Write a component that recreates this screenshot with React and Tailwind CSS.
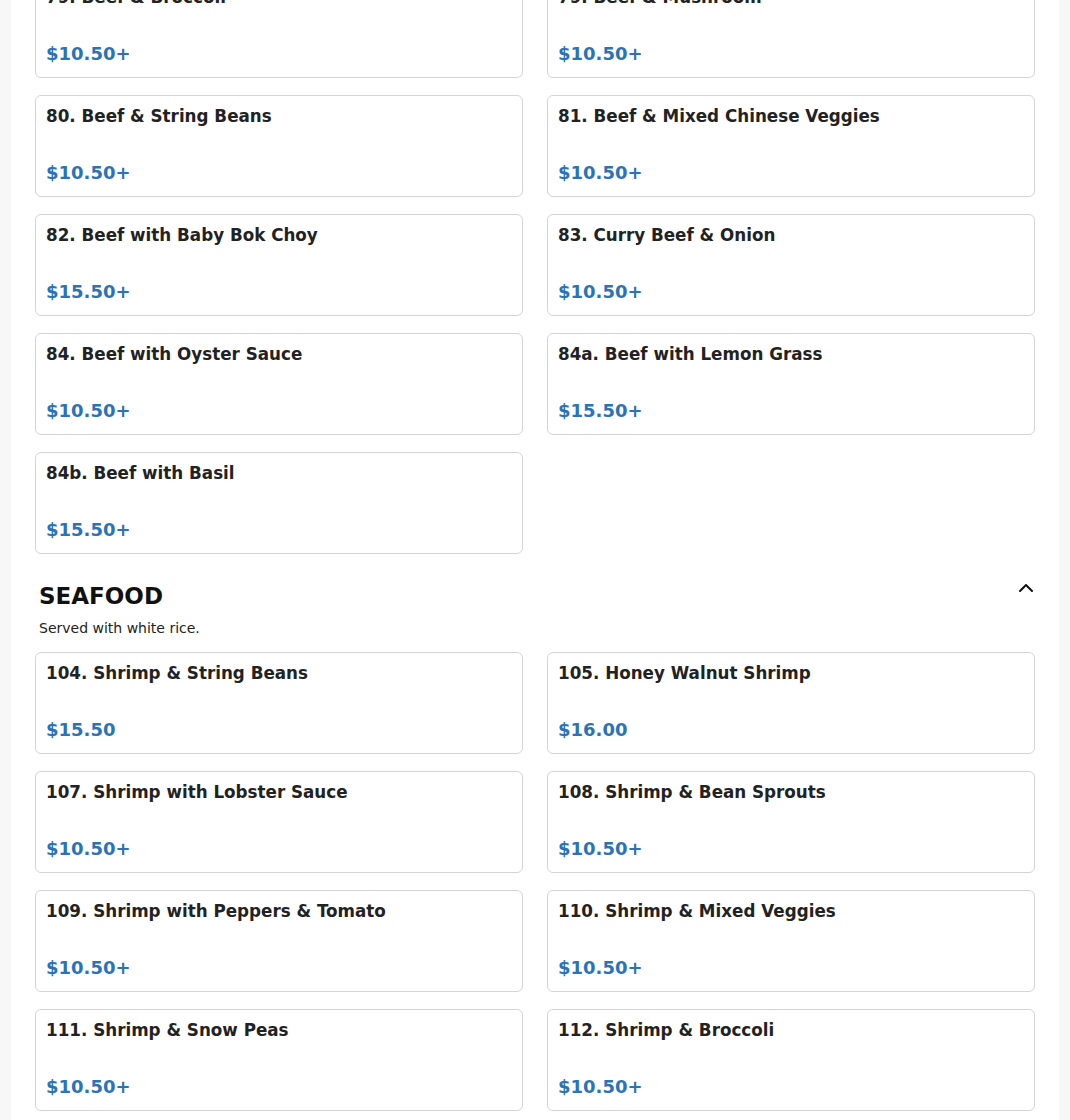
import { ChevronUp } from 'lucide-react';

const beef = [
  { name: '79. Beef & Broccoli', price: '$10.50+' },
  { name: '79. Beef & Mushroom', price: '$10.50+' },
  { name: '80. Beef & String Beans', price: '$10.50+' },
  { name: '81. Beef & Mixed Chinese Veggies', price: '$10.50+' },
  { name: '82. Beef with Baby Bok Choy', price: '$15.50+' },
  { name: '83. Curry Beef & Onion', price: '$10.50+' },
  { name: '84. Beef with Oyster Sauce', price: '$10.50+' },
  { name: '84a. Beef with Lemon Grass', price: '$15.50+' },
  { name: '84b. Beef with Basil', price: '$15.50+' },
];

const seafood = [
  { name: '104. Shrimp & String Beans', price: '$15.50' },
  { name: '105. Honey Walnut Shrimp', price: '$16.00' },
  { name: '107. Shrimp with Lobster Sauce', price: '$10.50+' },
  { name: '108. Shrimp & Bean Sprouts', price: '$10.50+' },
  { name: '109. Shrimp with Peppers & Tomato', price: '$10.50+' },
  { name: '110. Shrimp & Mixed Veggies', price: '$10.50+' },
  { name: '111. Shrimp & Snow Peas', price: '$10.50+' },
  { name: '112. Shrimp & Broccoli', price: '$10.50+' },
];

function ItemCard({ item }) {
  return (
    <div className="h-[102px] rounded-md border border-[#d4d4d4] bg-white px-[10px] pt-[8px] pb-[11px] flex flex-col justify-between">
      <h3 className="text-[16.75px] leading-6 font-bold text-[#222]">{item.name}</h3>
      <p className="text-[18px] leading-6 font-bold text-[#2b73b6]">{item.price}</p>
    </div>
  );
}

export default function App() {
  return (
    <div className="h-[1120px] overflow-hidden bg-[#f7f7f7]" style={{ fontFamily: '"DejaVu Sans", sans-serif' }}>
      <div className="flow-root mx-[11px] w-[1048px] h-full bg-white px-[24px]">
        {/* Beef (scrolled) */}
        <div className="grid grid-cols-2 gap-x-[24px] gap-y-[17px] -mt-[24px]">
          {beef.map((item) => (
            <ItemCard key={item.name} item={item} />
          ))}
        </div>

        {/* Seafood */}
        <div className="mt-[28px] flex items-start justify-between pl-[4px]">
          <h2 className="text-[23px] leading-[28px] font-bold text-[#111] uppercase">Seafood</h2>
          <button className="-mt-[6px] -mr-[3px] text-[#111]">
            <ChevronUp size={24} strokeWidth={2} />
          </button>
        </div>
        <p className="mt-[8px] pl-[4px] text-sm leading-5 text-[#222]">Served with white rice.</p>
        <div className="mt-[14px] grid grid-cols-2 gap-x-[24px] gap-y-[17px]">
          {seafood.map((item) => (
            <ItemCard key={item.name} item={item} />
          ))}
        </div>
      </div>
    </div>
  );
}
